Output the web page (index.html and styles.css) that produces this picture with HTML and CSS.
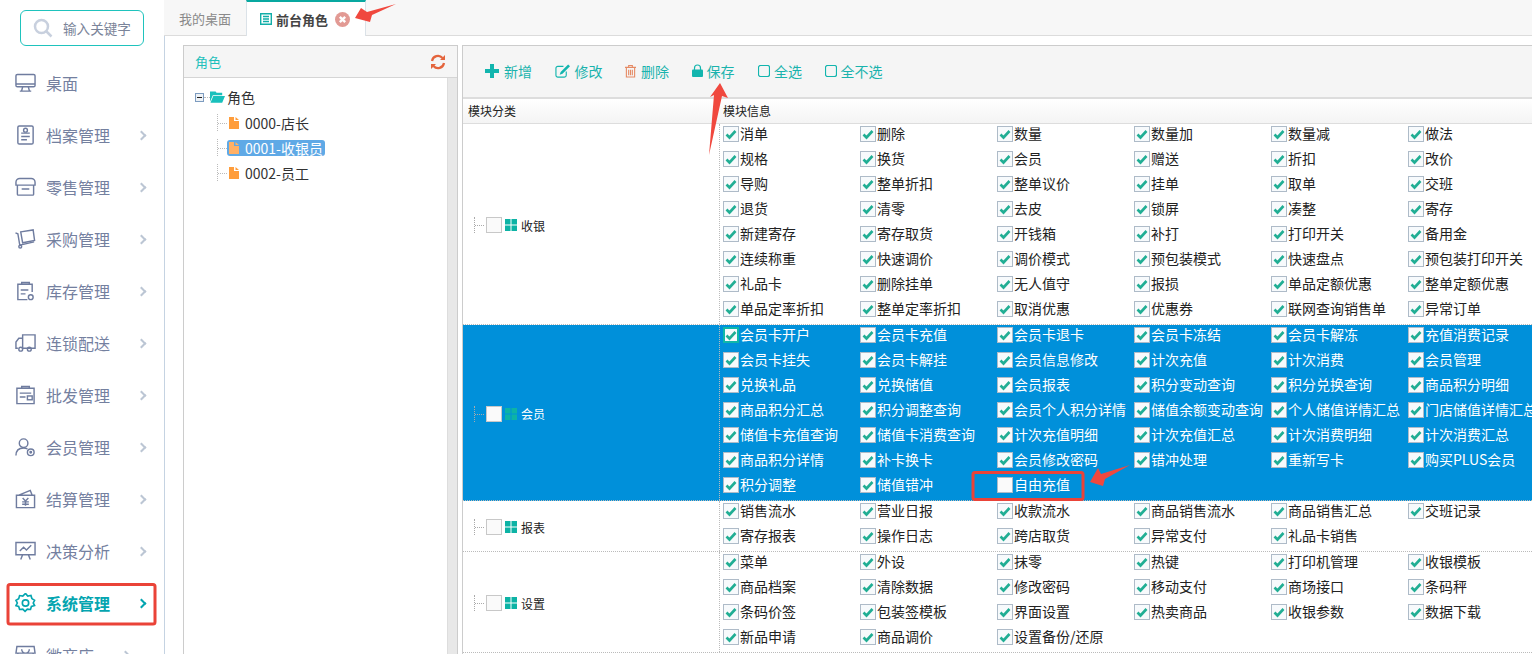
FILE: index.html
```html
<!DOCTYPE html>
<html lang="zh-CN">
<head>
<meta charset="utf-8">
<title>前台角色</title>
<link rel="stylesheet" href="styles.css">
</head>
<body>
<div class="app">
  <aside class="sidebar">
    <div class="search">
      <svg class="search-icon" width="22" height="22" viewBox="0 0 22 22"><circle cx="9.5" cy="9.5" r="6.5"/><path d="M14.5 14.5l5 5"/></svg>
      <span>输入关键字</span>
    </div>
    <nav class="menu">
      <a class="item"><svg class="ico" viewBox="0 0 22 20"><rect x="1" y="1" width="20" height="13" rx="1.5"/><path d="M1 11h20M8 14l-1 4M14 14l1 4M5 18.500h12"/></svg><span>桌面</span></a>
      <a class="item"><svg class="ico" viewBox="0 0 22 20"><rect x="3" y="0.500" width="16" height="19" rx="1.5"/><circle cx="11" cy="5" r="2"/><path d="M6.500 8h9M6.500 11.500h9M6.500 15h6"/></svg><span>档案管理</span><i class="chev"></i></a>
      <a class="item"><svg class="ico" viewBox="0 0 22 20"><path d="M5 1h12a4 4 0 0 1 4 4v3H1V5a4 4 0 0 1 4-4zM2.500 8v9.500a1 1 0 0 0 1 1h15a1 1 0 0 0 1-1V8M7 12h8"/></svg><span>零售管理</span><i class="chev"></i></a>
      <a class="item"><svg class="ico" viewBox="0 0 22 20"><path d="M0.500 3.500l2.500 1 2 12 15-3.500"/><path d="M6 2.500l13-2 1.500 11-12.500 2.500z"/><circle cx="5.500" cy="18" r="1.500"/></svg><span>采购管理</span><i class="chev"></i></a>
      <a class="item"><svg class="ico" viewBox="0 0 22 20"><path d="M7 3V1h8v2M18 11V3H3v16h10M6 9h8M6 13h5"/><circle cx="16.500" cy="16.500" r="2.500"/></svg><span>库存管理</span><i class="chev"></i></a>
      <a class="item"><svg class="ico" viewBox="0 0 22 20"><path d="M8 1.500h13v14H8zM8 5H4L1 9v6.500h2M8 5v10.500M9 15.500h3"/><circle cx="6" cy="16.500" r="2"/><circle cx="15" cy="16.500" r="2"/></svg><span>连锁配送</span><i class="chev"></i></a>
      <a class="item"><svg class="ico" viewBox="0 0 22 20"><path d="M7 3V1h8v2M2 3h18v16H2zM5 8h12M5 12h6"/><rect x="13" y="11" width="5" height="4"/></svg><span>批发管理</span><i class="chev"></i></a>
      <a class="item"><svg class="ico" viewBox="0 0 22 20"><circle cx="9" cy="6" r="4.500"/><path d="M1 19c0-5 3-8 8-8 1.500 0 3 .4 4 1"/><circle cx="16.500" cy="15.500" r="3.500"/><circle cx="16.500" cy="15.500" r=".8"/></svg><span>会员管理</span><i class="chev"></i></a>
      <a class="item"><svg class="ico" viewBox="0 0 22 20"><path d="M4 6l12-5 2 5M1.500 6h19v13h-19zM8 9l3 3 3-3M7.500 13h7M7.500 15.500h7M11 12v5"/></svg><span>结算管理</span><i class="chev"></i></a>
      <a class="item"><svg class="ico" viewBox="0 0 22 20"><path d="M1 1h20v13H1zM5 10l4-4 3 3 5-5M8 14l-2 5M14 14l2 5"/></svg><span>决策分析</span><i class="chev"></i></a>
      <a class="item active"><svg class="ico" viewBox="0 0 22 22"><path d="M11 1l2.500 3 3.500-.6 1 3.500 3 2-1.500 3 1.500 3-3.500 1-1 3.500-3.500-.4-2.500 2.500-2.500-2.500-3.500.4-1-3.500L.5 15l1.500-3-1.500-3 3-2 1-3.500 3.500.6z" transform="translate(0 -.5) scale(1 .96)"/><circle cx="11" cy="11" r="3.500"/></svg><span>系统管理</span><i class="chev"></i></a>
      <a class="item"><svg class="ico" viewBox="0 0 22 20"><path d="M2 1h18l1 7H1zM3 8v11h16V8M7 4a4 4 0 0 0 8 0"/></svg><span>微商店</span><i class="chev"></i></a>
    </nav>
  </aside>
  <main class="main">
    <div class="tabs">
      <div class="tab">我的桌面</div>
      <div class="tab current">
        <svg class="tab-ico" width="12" height="12" viewBox="0 0 12 12"><path d="M.7.7h10.600v10.600H.7zM3 3.500h6M3 6h6M3 8.500h6"/></svg>
        <span>前台角色</span>
        <svg class="tab-close" width="15" height="15" viewBox="0 0 14 14"><circle cx="7" cy="7" r="7"/><path d="M4.500 4.500l5 5M9.500 4.500l-5 5"/></svg>
      </div>
    </div>
    <div class="content">
      <section class="tree-panel">
        <header class="tree-head">
          <span>角色</span>
          <svg width="16" height="16" viewBox="0 0 16 16" class="refresh"><path d="M2 7a6 6 0 0 1 10.500-3M14 9a6 6 0 0 1-10.500 3"/><path class="fill" d="M15 1v5h-5zM1 15v-5h5z"/></svg>
        </header>
        <div class="tree-body">
          <div class="tree-list">
            <div class="node root">
              <i class="expander"></i><i class="dots"></i>
              <svg width="15" height="12" viewBox="0 0 16 12" class="folder"><path d="M0 2V0h6l1 1.500h6V4H3L0 11zM3.500 5H16l-3 7H.5z"/></svg>
              <span>角色</span>
            </div>
            <div class="node leaf"><i class="line"></i><span class="leaf-box"><svg class="file" width="10" height="12" viewBox="0 0 10 12"><path d="M0 0h5v4h5v8H0zM6.500 0L10 3H6.500z"/></svg><span class="leaf-text">0000-店长</span></span></div>
            <div class="node leaf sel"><i class="line"></i><span class="leaf-box"><svg class="file" width="10" height="12" viewBox="0 0 10 12"><path d="M0 0h5v4h5v8H0zM6.500 0L10 3H6.500z"/></svg><span class="leaf-text">0001-收银员</span></span></div>
            <div class="node leaf"><i class="line"></i><span class="leaf-box"><svg class="file" width="10" height="12" viewBox="0 0 10 12"><path d="M0 0h5v4h5v8H0zM6.500 0L10 3H6.500z"/></svg><span class="leaf-text">0002-员工</span></span></div>
          </div>
          <div class="scroll"></div>
        </div>
      </section>
      <section class="perm-panel">
        <div class="toolbar">
          <a class="tool"><svg width="14" height="14" viewBox="0 0 14 14"><path class="fill" d="M5 0h4v5h5v4H9v5H5V9H0V5h5z"/></svg>新增</a>
          <a class="tool"><svg width="15" height="14" viewBox="0 0 16 14"><path d="M12 7.500v4a2 2 0 0 1-2 2H3a2 2 0 0 1-2-2V4a2 2 0 0 1 2-2h6"/><path class="fill" d="M14 0l2 2-8 8-3 1 1-3z"/></svg>修改</a>
          <a class="tool"><svg class="trash" width="11" height="14" viewBox="0 0 12 14"><path d="M0 3h12M4 3V1h4v2M1.500 3v10.500h9V3M4 5.500v6M6 5.500v6M8 5.500v6"/></svg>删除</a>
          <a class="tool tight"><svg width="11" height="13" viewBox="0 0 11 13"><path d="M2.500 6V4a3 3 0 0 1 6 0v2"/><rect class="fill" x="0" y="5.500" width="11" height="7.500" rx="1"/></svg>保存</a>
          <a class="tool tight after-lock"><svg width="12" height="12" viewBox="0 0 12 12"><rect x=".5" y=".5" width="11" height="11" rx="2"/></svg>全选</a>
          <a class="tool tight"><svg width="12" height="12" viewBox="0 0 12 12"><rect x=".5" y=".5" width="11" height="11" rx="2"/></svg>全不选</a>
        </div>
        <div class="thead"><div class="th-a">模块分类</div><div class="th-b">模块信息</div></div>

        <div class="group">
          <div class="glabel"><i class="gline"></i><i class="cb off"></i><svg class="grid-ico" width="12" height="12" viewBox="0 0 12 12"><path d="M0 0h5.500v5.500H0zM6.500 0H12v5.500H6.500zM0 6.500h5.500V12H0zM6.500 6.500H12V12H6.500z"/></svg><span>收银</span></div>
          <div class="cells">
            <label class="c"><i class="cb"></i>消单</label><label class="c"><i class="cb"></i>删除</label><label class="c"><i class="cb"></i>数量</label><label class="c"><i class="cb"></i>数量加</label><label class="c"><i class="cb"></i>数量减</label><label class="c"><i class="cb"></i>做法</label>
            <label class="c"><i class="cb"></i>规格</label><label class="c"><i class="cb"></i>换货</label><label class="c"><i class="cb"></i>会员</label><label class="c"><i class="cb"></i>赠送</label><label class="c"><i class="cb"></i>折扣</label><label class="c"><i class="cb"></i>改价</label>
            <label class="c"><i class="cb"></i>导购</label><label class="c"><i class="cb"></i>整单折扣</label><label class="c"><i class="cb"></i>整单议价</label><label class="c"><i class="cb"></i>挂单</label><label class="c"><i class="cb"></i>取单</label><label class="c"><i class="cb"></i>交班</label>
            <label class="c"><i class="cb"></i>退货</label><label class="c"><i class="cb"></i>清零</label><label class="c"><i class="cb"></i>去皮</label><label class="c"><i class="cb"></i>锁屏</label><label class="c"><i class="cb"></i>凑整</label><label class="c"><i class="cb"></i>寄存</label>
            <label class="c"><i class="cb"></i>新建寄存</label><label class="c"><i class="cb"></i>寄存取货</label><label class="c"><i class="cb"></i>开钱箱</label><label class="c"><i class="cb"></i>补打</label><label class="c"><i class="cb"></i>打印开关</label><label class="c"><i class="cb"></i>备用金</label>
            <label class="c"><i class="cb"></i>连续称重</label><label class="c"><i class="cb"></i>快速调价</label><label class="c"><i class="cb"></i>调价模式</label><label class="c"><i class="cb"></i>预包装模式</label><label class="c"><i class="cb"></i>快速盘点</label><label class="c"><i class="cb"></i>预包装打印开关</label>
            <label class="c"><i class="cb"></i>礼品卡</label><label class="c"><i class="cb"></i>删除挂单</label><label class="c"><i class="cb"></i>无人值守</label><label class="c"><i class="cb"></i>报损</label><label class="c"><i class="cb"></i>单品定额优惠</label><label class="c"><i class="cb"></i>整单定额优惠</label>
            <label class="c"><i class="cb"></i>单品定率折扣</label><label class="c"><i class="cb"></i>整单定率折扣</label><label class="c"><i class="cb"></i>取消优惠</label><label class="c"><i class="cb"></i>优惠券</label><label class="c"><i class="cb"></i>联网查询销售单</label><label class="c"><i class="cb"></i>异常订单</label>
          </div>
        </div>

        <div class="group hot">
          <div class="glabel"><i class="gline"></i><i class="cb off"></i><svg class="grid-ico" width="12" height="12" viewBox="0 0 12 12"><path d="M0 0h5.500v5.500H0zM6.500 0H12v5.500H6.500zM0 6.500h5.500V12H0zM6.500 6.500H12V12H6.500z"/></svg><span>会员</span></div>
          <div class="cells">
            <label class="c"><i class="cb focus"></i>会员卡开户</label><label class="c"><i class="cb"></i>会员卡充值</label><label class="c"><i class="cb"></i>会员卡退卡</label><label class="c"><i class="cb"></i>会员卡冻结</label><label class="c"><i class="cb"></i>会员卡解冻</label><label class="c"><i class="cb"></i>充值消费记录</label>
            <label class="c"><i class="cb"></i>会员卡挂失</label><label class="c"><i class="cb"></i>会员卡解挂</label><label class="c"><i class="cb"></i>会员信息修改</label><label class="c"><i class="cb"></i>计次充值</label><label class="c"><i class="cb"></i>计次消费</label><label class="c"><i class="cb"></i>会员管理</label>
            <label class="c"><i class="cb"></i>兑换礼品</label><label class="c"><i class="cb"></i>兑换储值</label><label class="c"><i class="cb"></i>会员报表</label><label class="c"><i class="cb"></i>积分变动查询</label><label class="c"><i class="cb"></i>积分兑换查询</label><label class="c"><i class="cb"></i>商品积分明细</label>
            <label class="c"><i class="cb"></i>商品积分汇总</label><label class="c"><i class="cb"></i>积分调整查询</label><label class="c"><i class="cb"></i>会员个人积分详情</label><label class="c"><i class="cb"></i>储值余额变动查询</label><label class="c"><i class="cb"></i>个人储值详情汇总</label><label class="c"><i class="cb"></i>门店储值详情汇总</label>
            <label class="c"><i class="cb"></i>储值卡充值查询</label><label class="c"><i class="cb"></i>储值卡消费查询</label><label class="c"><i class="cb"></i>计次充值明细</label><label class="c"><i class="cb"></i>计次充值汇总</label><label class="c"><i class="cb"></i>计次消费明细</label><label class="c"><i class="cb"></i>计次消费汇总</label>
            <label class="c"><i class="cb"></i>商品积分详情</label><label class="c"><i class="cb"></i>补卡换卡</label><label class="c"><i class="cb"></i>会员修改密码</label><label class="c"><i class="cb"></i>错冲处理</label><label class="c"><i class="cb"></i>重新写卡</label><label class="c"><i class="cb"></i>购买PLUS会员</label>
            <label class="c"><i class="cb"></i>积分调整</label><label class="c"><i class="cb"></i>储值错冲</label><label class="c"><i class="cb off"></i>自由充值</label>
          </div>
        </div>

        <div class="group">
          <div class="glabel"><i class="gline"></i><i class="cb off"></i><svg class="grid-ico" width="12" height="12" viewBox="0 0 12 12"><path d="M0 0h5.500v5.500H0zM6.500 0H12v5.500H6.500zM0 6.500h5.500V12H0zM6.500 6.500H12V12H6.500z"/></svg><span>报表</span></div>
          <div class="cells">
            <label class="c"><i class="cb"></i>销售流水</label><label class="c"><i class="cb"></i>营业日报</label><label class="c"><i class="cb"></i>收款流水</label><label class="c"><i class="cb"></i>商品销售流水</label><label class="c"><i class="cb"></i>商品销售汇总</label><label class="c"><i class="cb"></i>交班记录</label>
            <label class="c"><i class="cb"></i>寄存报表</label><label class="c"><i class="cb"></i>操作日志</label><label class="c"><i class="cb"></i>跨店取货</label><label class="c"><i class="cb"></i>异常支付</label><label class="c"><i class="cb"></i>礼品卡销售</label>
          </div>
        </div>

        <div class="group">
          <div class="glabel"><i class="gline"></i><i class="cb off"></i><svg class="grid-ico" width="12" height="12" viewBox="0 0 12 12"><path d="M0 0h5.500v5.500H0zM6.500 0H12v5.500H6.500zM0 6.500h5.500V12H0zM6.500 6.500H12V12H6.500z"/></svg><span>设置</span></div>
          <div class="cells">
            <label class="c"><i class="cb"></i>菜单</label><label class="c"><i class="cb"></i>外设</label><label class="c"><i class="cb"></i>抹零</label><label class="c"><i class="cb"></i>热键</label><label class="c"><i class="cb"></i>打印机管理</label><label class="c"><i class="cb"></i>收银模板</label>
            <label class="c"><i class="cb"></i>商品档案</label><label class="c"><i class="cb"></i>清除数据</label><label class="c"><i class="cb"></i>修改密码</label><label class="c"><i class="cb"></i>移动支付</label><label class="c"><i class="cb"></i>商场接口</label><label class="c"><i class="cb"></i>条码秤</label>
            <label class="c"><i class="cb"></i>条码价签</label><label class="c"><i class="cb"></i>包装签模板</label><label class="c"><i class="cb"></i>界面设置</label><label class="c"><i class="cb"></i>热卖商品</label><label class="c"><i class="cb"></i>收银参数</label><label class="c"><i class="cb"></i>数据下载</label>
            <label class="c"><i class="cb"></i>新品申请</label><label class="c"><i class="cb"></i>商品调价</label><label class="c"><i class="cb"></i>设置备份/还原</label>
          </div>
        </div>
      </section>
    </div>
  </main>
</div>
<svg class="marks" width="1532" height="654" viewBox="0 0 1532 654">
  <rect class="box" x="8" y="584.500" width="147" height="39.500" rx="2"/>
  <rect class="box" x="973" y="472.500" width="110" height="27" rx="2"/>
  <polygon points="355,18 361,8 367,12 396,4 372,15 370,22"/>
  <polygon points="720,83 728,98 722,96 709,155 714,95 710,97"/>
  <polygon points="1090,482 1098,468 1101,474 1130,465 1105,479 1103,486"/>
</svg>
</body>
</html>
```
FILE: styles.css
```css
* { box-sizing: border-box; }
html, body { margin: 0; height: 654px; overflow: hidden; }
body {
  position: relative;
  background: #fff;
  font-family: "Noto Sans CJK SC", "Noto Sans", sans-serif;
  font-size: 14px;
  color: #222;
}
.app { display: flex; width: 1532px; height: 654px; }

/* sidebar */
.sidebar { width: 164px; flex: none; overflow: hidden; background: #fff; padding-top: 10px; }
.search {
  display: flex; align-items: center;
  width: 124px; height: 36px; margin-left: 20px;
  border: 1px solid #1fc3bd; border-radius: 6px;
  padding-left: 11px; color: #7a8499; font-size: 13.6px; white-space: nowrap;
}
.search-icon { fill: none; stroke: #c8d0de; stroke-width: 2.500; margin-right: 9px; flex: none; }
.menu { margin-top: 11px; }
.item {
  display: flex; align-items: center; height: 52px;
  padding-left: 15px; font-size: 16px; color: #74809f; white-space: nowrap;
}
.ico { width: 21px; height: 20px; margin-right: 10px; flex: none; fill: none; stroke: #6f7c9f; stroke-width: 1.500; }
.chev {
  width: 7px; height: 7px; margin-left: 28px;
  border-top: 2px solid #bcc6d4; border-right: 2px solid #bcc6d4;
  transform: rotate(45deg);
}
.item.active { color: #04a5b0; font-weight: 700; }
.item.active .ico { stroke: #04a5b0; stroke-width: 1.800; }
.item.active .chev { border-color: #04a5b0; }

/* main */
.main { flex: 1; min-width: 0; display: flex; flex-direction: column; }
.tabs {
  display: flex; height: 36px; flex: none;
  background: #f7f7f7; border-bottom: 1px solid #dcdcdc;
}
.tab {
  display: flex; align-items: center; justify-content: center;
  width: 82px; height: 36px; font-size: 13px; color: #8a8a8a;
}
.tab.current {
  width: 120px; gap: 4px; justify-content: flex-start; padding-left: 13px;
  background: #fff; color: #444; font-weight: 700;
  border-top: 2px solid #08a8a0; border-left: 1px solid #dbe2e8; border-right: 1px solid #dbe2e8;
}
.tab-ico { fill: none; stroke: #12aea8; stroke-width: 1.400; flex: none; }
.tab-close { margin-left: 3px; flex: none; }
.tab-close circle { fill: #e29a94; }
.tab-close path { stroke: #fff; stroke-width: 2.200; }

.content {
  flex: 1; min-height: 0; display: flex; align-items: stretch; gap: 4px;
  padding: 9px 0 0 18px; border-left: 1px solid #c5d3e2; overflow: hidden;
}

/* tree */
.tree-panel {
  width: 275px; flex: none; display: flex; flex-direction: column;
  border: 1px solid #ccc; border-bottom: 0;
}
.tree-head {
  display: flex; align-items: center; justify-content: space-between;
  height: 32px; flex: none; padding: 0 11px 0 11px;
  background: #f5f5f5; border-bottom: 1px solid #d5d5d5;
  color: #1dc0bb; font-size: 13px;
}
.refresh { fill: none; stroke: #e4643c; stroke-width: 2.200; }
.refresh .fill { fill: #e4643c; stroke: none; }
.tree-body { flex: 1; display: flex; min-height: 0; }
.tree-list { flex: 1; padding-top: 6px; }
.scroll { width: 10px; background: #e8e8e8; border-left: 1px solid #ddd; }
.node { display: flex; align-items: center; height: 25px; color: #333; font-size: 14px; white-space: nowrap; }
.root { padding-left: 11px; height: 26px; }
.expander {
  position: relative; width: 9px; height: 9px; flex: none;
  border: 1px solid #7d9cc0; background: #eef2f6;
}
.expander::after { content: ""; position: absolute; left: 1px; right: 1px; top: 3px; height: 1px; background: #222; }
.dots { width: 6px; border-top: 1px dotted #bbb; flex: none; }
.folder { fill: #18c0bc; margin-right: 2px; flex: none; }
.leaf { padding-left: 33px; }
.line { width: 10px; height: 17px; flex: none; border-left: 1px dotted #bbb; position: relative; }
.line::after { content: ""; position: absolute; left: 0; width: 9px; top: 9px; border-top: 1px dotted #bbb; }
.leaf-box { display: flex; align-items: center; height: 16px; padding: 0 2px; border-radius: 3px; }
.file { fill: #ff9d3b; margin-right: 6px; flex: none; }
.sel .leaf-box { background: #5fa9e6; color: #fff; }
.sel .file { fill: #ffb066; }

/* permissions */
.perm-panel { flex: 1; min-width: 0; border-left: 1px solid #ccc; border-top: 1px solid #ccc; overflow: hidden; }
.toolbar {
  display: flex; align-items: center; height: 53px; padding-left: 22px; gap: 22.5px;
  background: #f5f5f5; border-bottom: 2px solid #ddd; color: #1ab3ad;
  padding-bottom: 2px;
}
.tool { display: flex; align-items: center; gap: 5px; white-space: nowrap; font-size: 14px; }
.tool.tight { gap: 4px; }
.tool.after-lock { margin-left: 1px; }
.tool svg { fill: none; stroke: #12b5ae; stroke-width: 1.200; flex: none; }
.tool svg .fill { fill: #12b5ae; stroke: none; }
.tool svg.trash { stroke: #e58a64; }
.thead {
  display: flex; height: 25px; align-items: center; font-size: 12px; color: #222;
  padding-bottom: 2px;
  background: linear-gradient(#fff, #f4f4f4); border-bottom: 1px solid #ddd;
}
.th-a { width: 260px; padding-left: 5px; }
.group { display: flex; border-bottom: 1px dotted #bbb; }
.group.hot { background: #0090da; color: #fff; }
.glabel {
  width: 256px; flex: none; display: flex; align-items: center;
  padding: 2px 0 0 11px; font-size: 12px;
}
.gline { width: 12px; height: 16px; border-left: 1px dotted #aaa; position: relative; flex: none; }
.gline::after { content: ""; position: absolute; left: 0; right: 2px; top: 8px; border-top: 1px dotted #aaa; }
.grid-ico { fill: #0db3a5; margin: 0 4px 0 3px; flex: none; }
.cells {
  flex: 1; display: grid;
  grid-template-columns: repeat(5, 137px) 124px;
  grid-auto-rows: 25px;
  border-left: 1px dotted #bbb; padding-left: 3px; overflow: hidden;
}
.c { display: flex; align-items: flex-start; white-space: nowrap; font-size: 14px; line-height: 18px; overflow: hidden; }
.cb {
  display: block; width: 16px; height: 16px; flex: none; margin-top: 2px; margin-right: 1px;
  border: 1px solid #aebbc8; background: #f7fafc;
  background-image: url("data:image/svg+xml,%3Csvg xmlns='http://www.w3.org/2000/svg' width='14' height='14' viewBox='0 0 14 14'%3E%3Cpath d='M2.500 7.500l3 3 6-6.500' fill='none' stroke='%2321ae94' stroke-width='2.600'/%3E%3C/svg%3E");
  background-position: center; background-repeat: no-repeat;
}
.cb.off { background-image: none; background-color: #fafafa; }
.cb.focus { border-color: #0fb7a8; border-width: 2px; }
.glabel .cb { margin: 0; border-color: #c8c8c8; }

/* annotations */
.marks { position: absolute; left: 0; top: 0; pointer-events: none; }
.marks polygon { fill: #f0483e; }
.marks .box { fill: none; stroke: #ea4338; stroke-width: 3; }
```
